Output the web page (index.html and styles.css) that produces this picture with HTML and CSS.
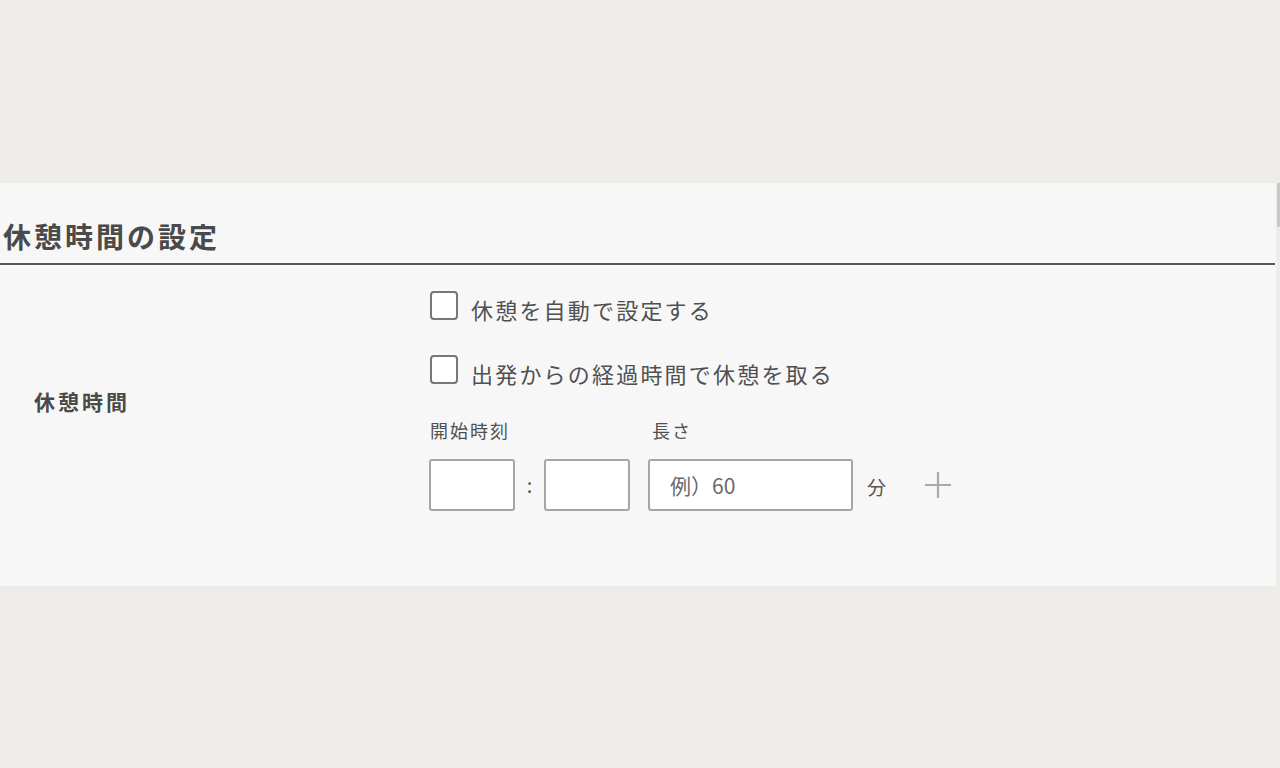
FILE: index.html
```html
<!DOCTYPE html>
<html lang="ja">
<head>
<meta charset="utf-8">
<title>休憩時間の設定</title>
<link rel="stylesheet" href="styles.css">
</head>
<body>
<div class="page">
  <section class="panel">
    <h2 class="heading">休憩時間の設定</h2>
    <div class="row">
      <div class="row-label">休憩時間</div>
      <div class="row-body">
        <label class="check"><span class="box"></span><span class="check-text">休憩を自動で設定する</span></label>
        <label class="check"><span class="box"></span><span class="check-text">出発からの経過時間で休憩を取る</span></label>
        <div class="fields">
          <div class="group">
            <div class="field-label">開始時刻</div>
            <div class="inputs">
              <input class="input small" type="text">
              <span class="colon">:</span>
              <input class="input small" type="text">
            </div>
          </div>
          <div class="group">
            <div class="field-label">長さ</div>
            <div class="inputs">
              <input class="input wide" type="text" placeholder="例）60">
              <span class="unit">分</span>
              <span class="plus"><svg width="28" height="28" viewBox="0 0 28 28"><path d="M14 1v26M1 14h26" stroke="#a9a9a9" stroke-width="2.2" fill="none"/></svg></span>
            </div>
          </div>
        </div>
      </div>
    </div>
  </section>
  <div class="scroll-thumb"></div>
</div>
</body>
</html>
```

FILE: styles.css
```css
html, body {
  margin: 0;
  padding: 0;
  background: #edece8;
  font-family: "Noto Sans CJK JP", "Noto Sans", sans-serif;
  color: #4f4f4f;
}
.page {
  position: relative;
  height: 768px;
  padding-top: 183px;
  box-sizing: border-box;
}
.panel {
  width: 1276px;
  height: 403px;
  background: #f7f7f7;
}
.heading {
  margin: 0;
  height: 82px;
  box-sizing: border-box;
  padding: 0 0 13px 3px;
  display: flex;
  align-items: flex-end;
  font-size: 28px;
  line-height: 28px;
  font-weight: 700;
  letter-spacing: 3px;
  color: #4a4a4a;
  border-bottom: 2px solid #555;
  width: 1275px;
}
.row {
  display: flex;
  align-items: center;
  padding: 26px 0 26px;
}
.row-label {
  width: 395px;
  padding-left: 34px;
  font-size: 21px;
  line-height: 24px;
  font-weight: 700;
  letter-spacing: 3px;
  color: #4a4a4a;
}
.row-body {
  display: flex;
  flex-direction: column;
}
.check {
  display: flex;
  align-items: center;
  height: 29px;
  margin-bottom: 35px;
  padding-left: 1px;
}
.box {
  width: 24px;
  height: 25px;
  border: 2px solid #777;
  border-radius: 4px;
  background: #fff;
  flex: none;
}
.check-text {
  margin-left: 13px;
  margin-top: 6px;
  font-size: 22px;
  line-height: 28px;
  letter-spacing: 2.2px;
  color: #505050;
}
.check + .check {
  margin-bottom: 34px;
}
.fields {
  display: flex;
  gap: 18px;
  margin-top: 1px;
}
.group {
  display: flex;
  flex-direction: column;
}
.field-label {
  font-size: 18px;
  line-height: 22px;
  letter-spacing: 2px;
  height: 22px;
  margin-bottom: 18px;
  padding-left: 1px;
  color: #505050;
}
.group + .group .field-label {
  padding-left: 4px;
}
.inputs {
  display: flex;
  align-items: center;
  height: 52px;
}
.input {
  height: 52px;
  box-sizing: border-box;
  border: 2px solid #a6a6a6;
  border-radius: 3px;
  background: #fff;
  margin: 0;
  padding: 0;
  font-family: inherit;
}
.input.small {
  width: 86px;
}
.input.wide {
  width: 205px;
  padding-left: 20px;
  font-size: 21px;
  color: #555;
}
.input.wide::placeholder {
  color: #6a6a6a;
}
.colon {
  width: 29px;
  text-align: center;
  font-size: 20px;
  line-height: 52px;
  color: #555;
}
.unit {
  margin-left: 14px;
  font-size: 19px;
  color: #555;
  padding-top: 2px;
}
.plus {
  margin-left: 38px;
  display: flex;
}
.scroll-thumb {
  position: absolute;
  right: 0;
  top: 183px;
  width: 3px;
  height: 44px;
  background: #c9c9c9;
}
```
